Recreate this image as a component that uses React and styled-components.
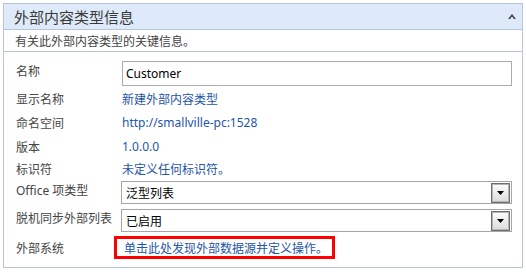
import React from 'react';
import styled, { createGlobalStyle } from 'styled-components';

const GlobalStyle = createGlobalStyle`
  html, body {
    margin: 0;
    padding: 0;
    background: #fff;
  }
  body {
    font-family: "Noto Sans", "Noto Sans CJK SC", sans-serif;
  }
`;

const Panel = styled.div`
  margin: 3px 0 0 3px;
  width: 520px;
  height: 265px;
  box-sizing: border-box;
  border: 1px solid #b7c5d8;
  display: flex;
  flex-direction: column;
`;

const Header = styled.div`
  height: 26px;
  box-sizing: border-box;
  background: #deeaf9;
  border-bottom: 1px solid #b7c5d8;
  display: flex;
  align-items: center;
  justify-content: space-between;
  padding: 0 6px 0 10px;
  font-size: 15px;
  color: #3a3a3a;
`;

const Desc = styled.div`
  height: 22px;
  box-sizing: border-box;
  border-bottom: 1px solid #b7c5d8;
  display: flex;
  align-items: center;
  padding-left: 11px;
  font-size: 12px;
  color: #444;
`;

const Body = styled.div`
  flex: 1;
  padding: 6px 10px 0 12px;
`;

const Row = styled.div`
  display: grid;
  grid-template-columns: 106px 1fr;
  align-items: center;
  height: ${(p) => p.$h}px;
`;

const Label = styled.div`
  font-size: 12px;
  color: #444;
  white-space: nowrap;
  margin-bottom: ${(p) => (p.$field ? 5 : 0)}px;
`;

const Value = styled.div`
  font-size: 12px;
  color: #2555a6;
  white-space: nowrap;
`;

const Input = styled.div`
  height: 25px;
  box-sizing: border-box;
  border: 1px solid #ababab;
  display: flex;
  align-items: center;
  padding-left: 3px;
  font-size: 12px;
  color: #000;
`;

const Select = styled.div`
  height: 23px;
  margin-left: -1px;
  box-sizing: border-box;
  border: 1px solid #a6a6a6;
  display: flex;
  align-items: center;
  justify-content: space-between;
  padding: 0 1px 0 4px;
  font-size: 12px;
  color: #000;
`;

const DropButton = styled.div`
  width: 19px;
  height: 20px;
  box-sizing: border-box;
  border: 1px solid #6f6f6f;
  box-shadow: inset 0 0 0 1px #b5b5b5;
  background: linear-gradient(#fdfdfd, #dcdcdc);
  display: flex;
  align-items: center;
  justify-content: center;
`;

const RedLink = styled.div`
  height: 23px;
  width: fit-content;
  margin-left: -8px;
  box-sizing: border-box;
  border: 3px solid #ff0000;
  display: flex;
  align-items: center;
  padding: 0 4px 0 7px;
  font-size: 12px;
  color: #2555a6;
  white-space: nowrap;
`;

const Chevron = () => (
  <svg width="8" height="5" viewBox="0 0 8 5">
    <path d="M0 5 L4 0 L8 5 L6 5 L4 2.6 L2 5 Z" fill="#444" />
  </svg>
);

const Arrow = () => (
  <svg width="7" height="4" viewBox="0 0 7 4">
    <path d="M0 0 H7 L3.5 4 Z" fill="#000" />
  </svg>
);

const Dropdown = ({ children }) => (
  <Select>
    <span>{children}</span>
    <DropButton>
      <Arrow />
    </DropButton>
  </Select>
);

export default function App() {
  return (
    <>
      <GlobalStyle />
      <Panel>
        <Header>
          <span>外部内容类型信息</span>
          <Chevron />
        </Header>
        <Desc>有关此外部内容类型的关键信息。</Desc>
        <Body>
          <Row $h={30}>
            <Label $field>名称</Label>
            <Input>Customer</Input>
          </Row>
          <Row $h={22}>
            <Label>显示名称</Label>
            <Value>新建外部内容类型</Value>
          </Row>
          <Row $h={25}>
            <Label>命名空间</Label>
            <Value>http://smallville-pc:1528</Value>
          </Row>
          <Row $h={23}>
            <Label>版本</Label>
            <Value>1.0.0.0</Value>
          </Row>
          <Row $h={22}>
            <Label>标识符</Label>
            <Value>未定义任何标识符。</Value>
          </Row>
          <Row $h={25}>
            <Label $field>Office 项类型</Label>
            <Dropdown>泛型列表</Dropdown>
          </Row>
          <Row $h={31}>
            <Label $field>脱机同步外部列表</Label>
            <Dropdown>已启用</Dropdown>
          </Row>
          <Row $h={23}>
            <Label>外部系统</Label>
            <RedLink>单击此处发现外部数据源并定义操作。</RedLink>
          </Row>
        </Body>
      </Panel>
    </>
  );
}
